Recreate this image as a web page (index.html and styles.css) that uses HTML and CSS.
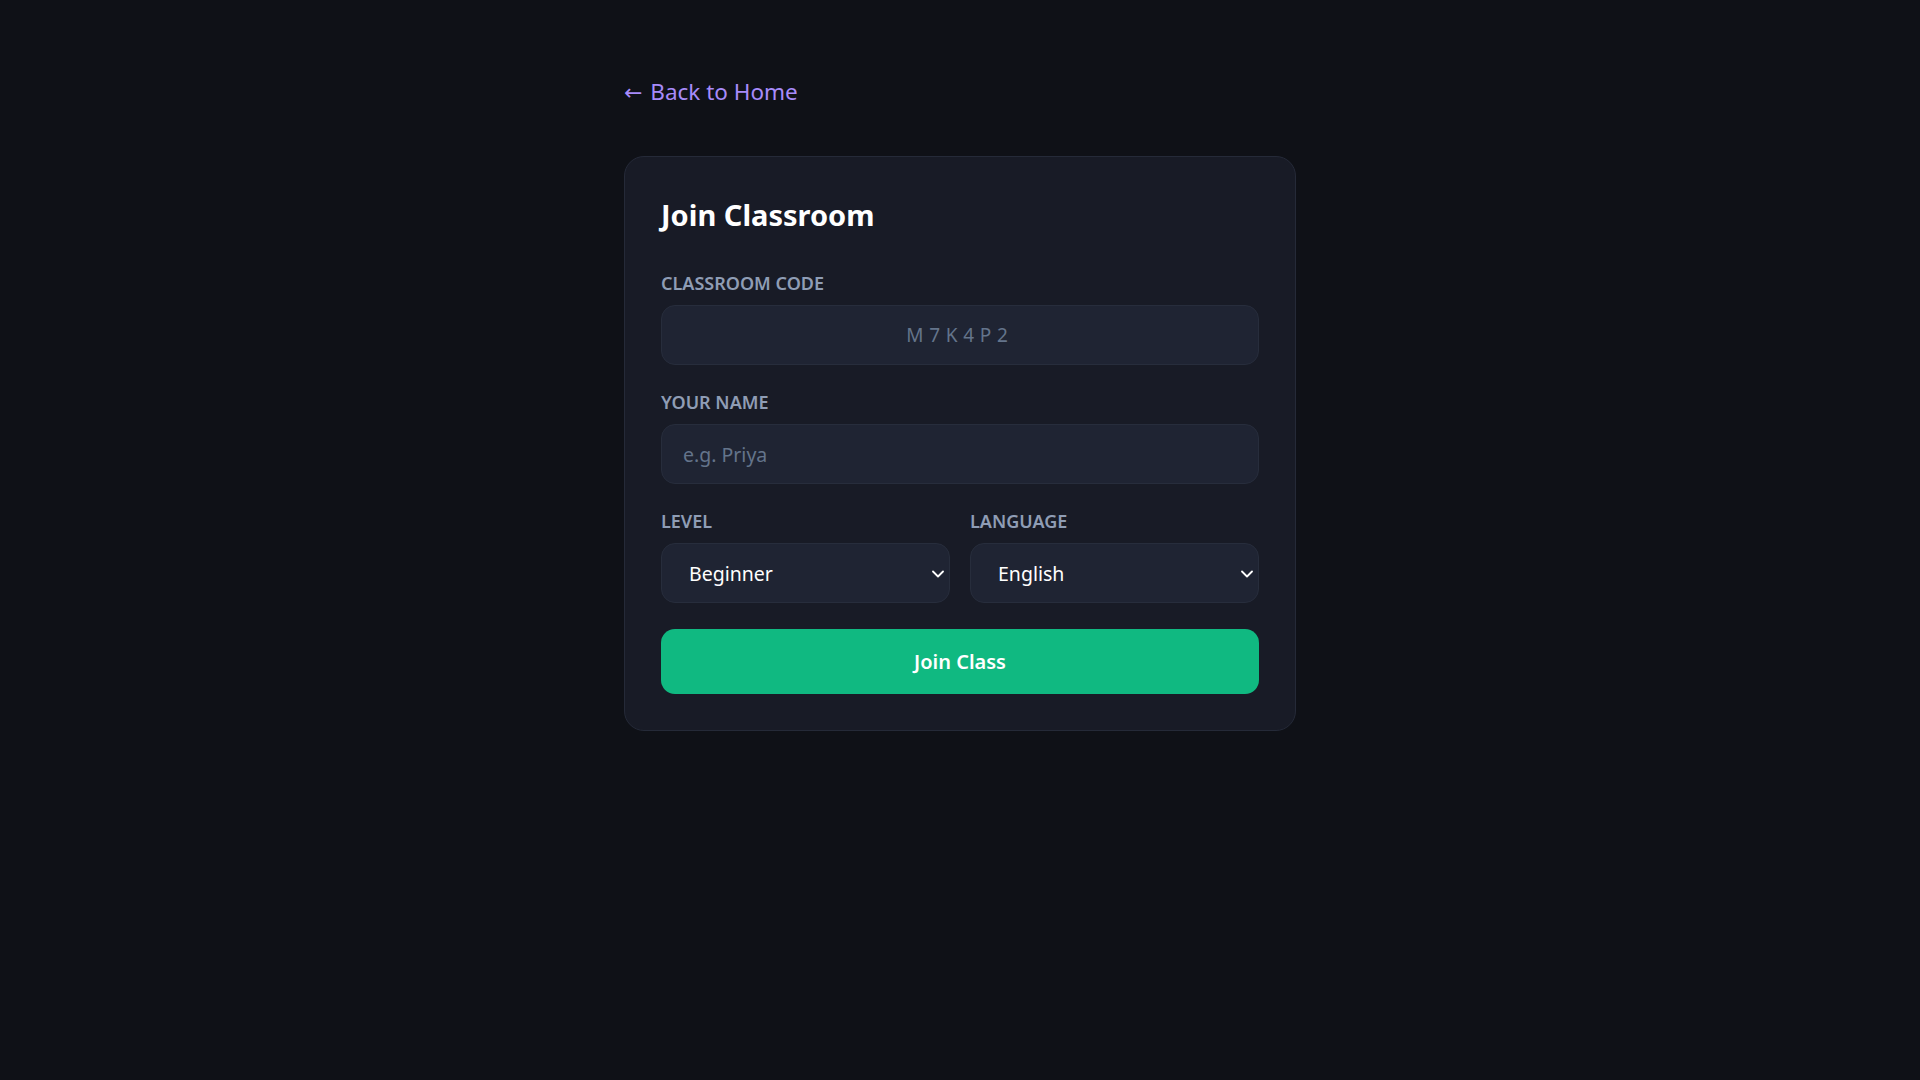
FILE: index.html
```html
<!DOCTYPE html>
<html lang="en">
<head>
<meta charset="utf-8">
<title>Join Classroom</title>
<link rel="stylesheet" href="styles.css">
</head>
<body>
<main class="page">
  <a class="back-link" href="#"><span class="back-arrow">←</span> Back to Home</a>
  <section class="card">
    <h1 class="card-title">Join Classroom</h1>
    <div class="field">
      <label class="field-label" for="code">Classroom Code</label>
      <input class="text-input code-input" id="code" type="text" placeholder="M7K4P2">
    </div>
    <div class="field">
      <label class="field-label" for="name">Your Name</label>
      <input class="text-input" id="name" type="text" placeholder="e.g. Priya">
    </div>
    <div class="field-row">
      <div class="field">
        <label class="field-label" for="level">Level</label>
        <div class="select-wrap">
          <select class="select" id="level">
            <option>Beginner</option>
            <option>Intermediate</option>
            <option>Advanced</option>
          </select>
          <svg class="chevron" width="12" height="8" viewBox="0 0 12 8"><polyline points="1,1.5 6,6.5 11,1.5" fill="none" stroke="#ffffff" stroke-width="1.8" stroke-linecap="round" stroke-linejoin="round"/></svg>
        </div>
      </div>
      <div class="field">
        <label class="field-label" for="lang">Language</label>
        <div class="select-wrap">
          <select class="select" id="lang">
            <option>English</option>
            <option>Hindi</option>
            <option>Spanish</option>
          </select>
          <svg class="chevron" width="12" height="8" viewBox="0 0 12 8"><polyline points="1,1.5 6,6.5 11,1.5" fill="none" stroke="#ffffff" stroke-width="1.8" stroke-linecap="round" stroke-linejoin="round"/></svg>
        </div>
      </div>
    </div>
    <button class="join-btn" type="button">Join Class</button>
  </section>
</main>
</body>
</html>
```

FILE: styles.css
```css
* { box-sizing: border-box; }

html, body {
  margin: 0;
  padding: 0;
  background: #0f1117;
  min-height: 100%;
}

body {
  font-family: "Noto Sans", "Open Sans", sans-serif;
  color: #ffffff;
}

.page {
  width: 672px;
  margin: 0 auto;
  padding-top: 76px;
  display: flex;
  flex-direction: column;
  align-items: stretch;
}

.back-link {
  align-self: flex-start;
  height: 32px;
  color: #a78bfa;
  text-decoration: none;
  font-size: 22.5px;
  line-height: 32px;
  margin-bottom: 48px;
}

.back-arrow {
  font-family: "DejaVu Sans", sans-serif;
  font-size: 22px;
  line-height: 1;
  margin-right: 2px;
}

.card {
  background: #181b26;
  border: 1px solid #252a38;
  border-radius: 20px;
  padding: 36px;
  display: flex;
  flex-direction: column;
  gap: 26px;
}

.card-title {
  margin: 0 0 9px;
  font-size: 29px;
  line-height: 44px;
  font-weight: 700;
  color: #ffffff;
}

.field {
  display: flex;
  flex-direction: column;
  gap: 11px;
  min-width: 0;
}

.field-label {
  font-size: 18px;
  line-height: 22px;
  font-weight: 600;
  text-transform: uppercase;
  color: #8f9db5;
}

.text-input {
  height: 60px;
  width: 100%;
  background: #1f2433;
  border: 1px solid #272d3c;
  border-radius: 14px;
  padding: 0 21px;
  font-family: inherit;
  font-size: 19.5px;
  color: #ffffff;
  outline: none;
}

.text-input::placeholder {
  color: #64748b;
}

.code-input {
  text-align: center;
  letter-spacing: 0.3em;
  font-size: 19px;
}

.field-row {
  display: grid;
  grid-template-columns: 1fr 1fr;
  gap: 20px;
}

.select-wrap {
  position: relative;
}

.select {
  appearance: none;
  -webkit-appearance: none;
  width: 100%;
  height: 60px;
  background: #1f2433;
  border: 1px solid #272d3c;
  border-radius: 14px;
  padding: 0 27px;
  font-family: inherit;
  font-size: 19.5px;
  color: #ffffff;
  outline: none;
}

.chevron {
  position: absolute;
  right: 6px;
  top: 27px;
  pointer-events: none;
}

.join-btn {
  height: 65px;
  border: none;
  border-radius: 14px;
  background: #10b981;
  color: #ffffff;
  font-family: inherit;
  font-size: 20px;
  font-weight: 600;
  cursor: pointer;
}
```
